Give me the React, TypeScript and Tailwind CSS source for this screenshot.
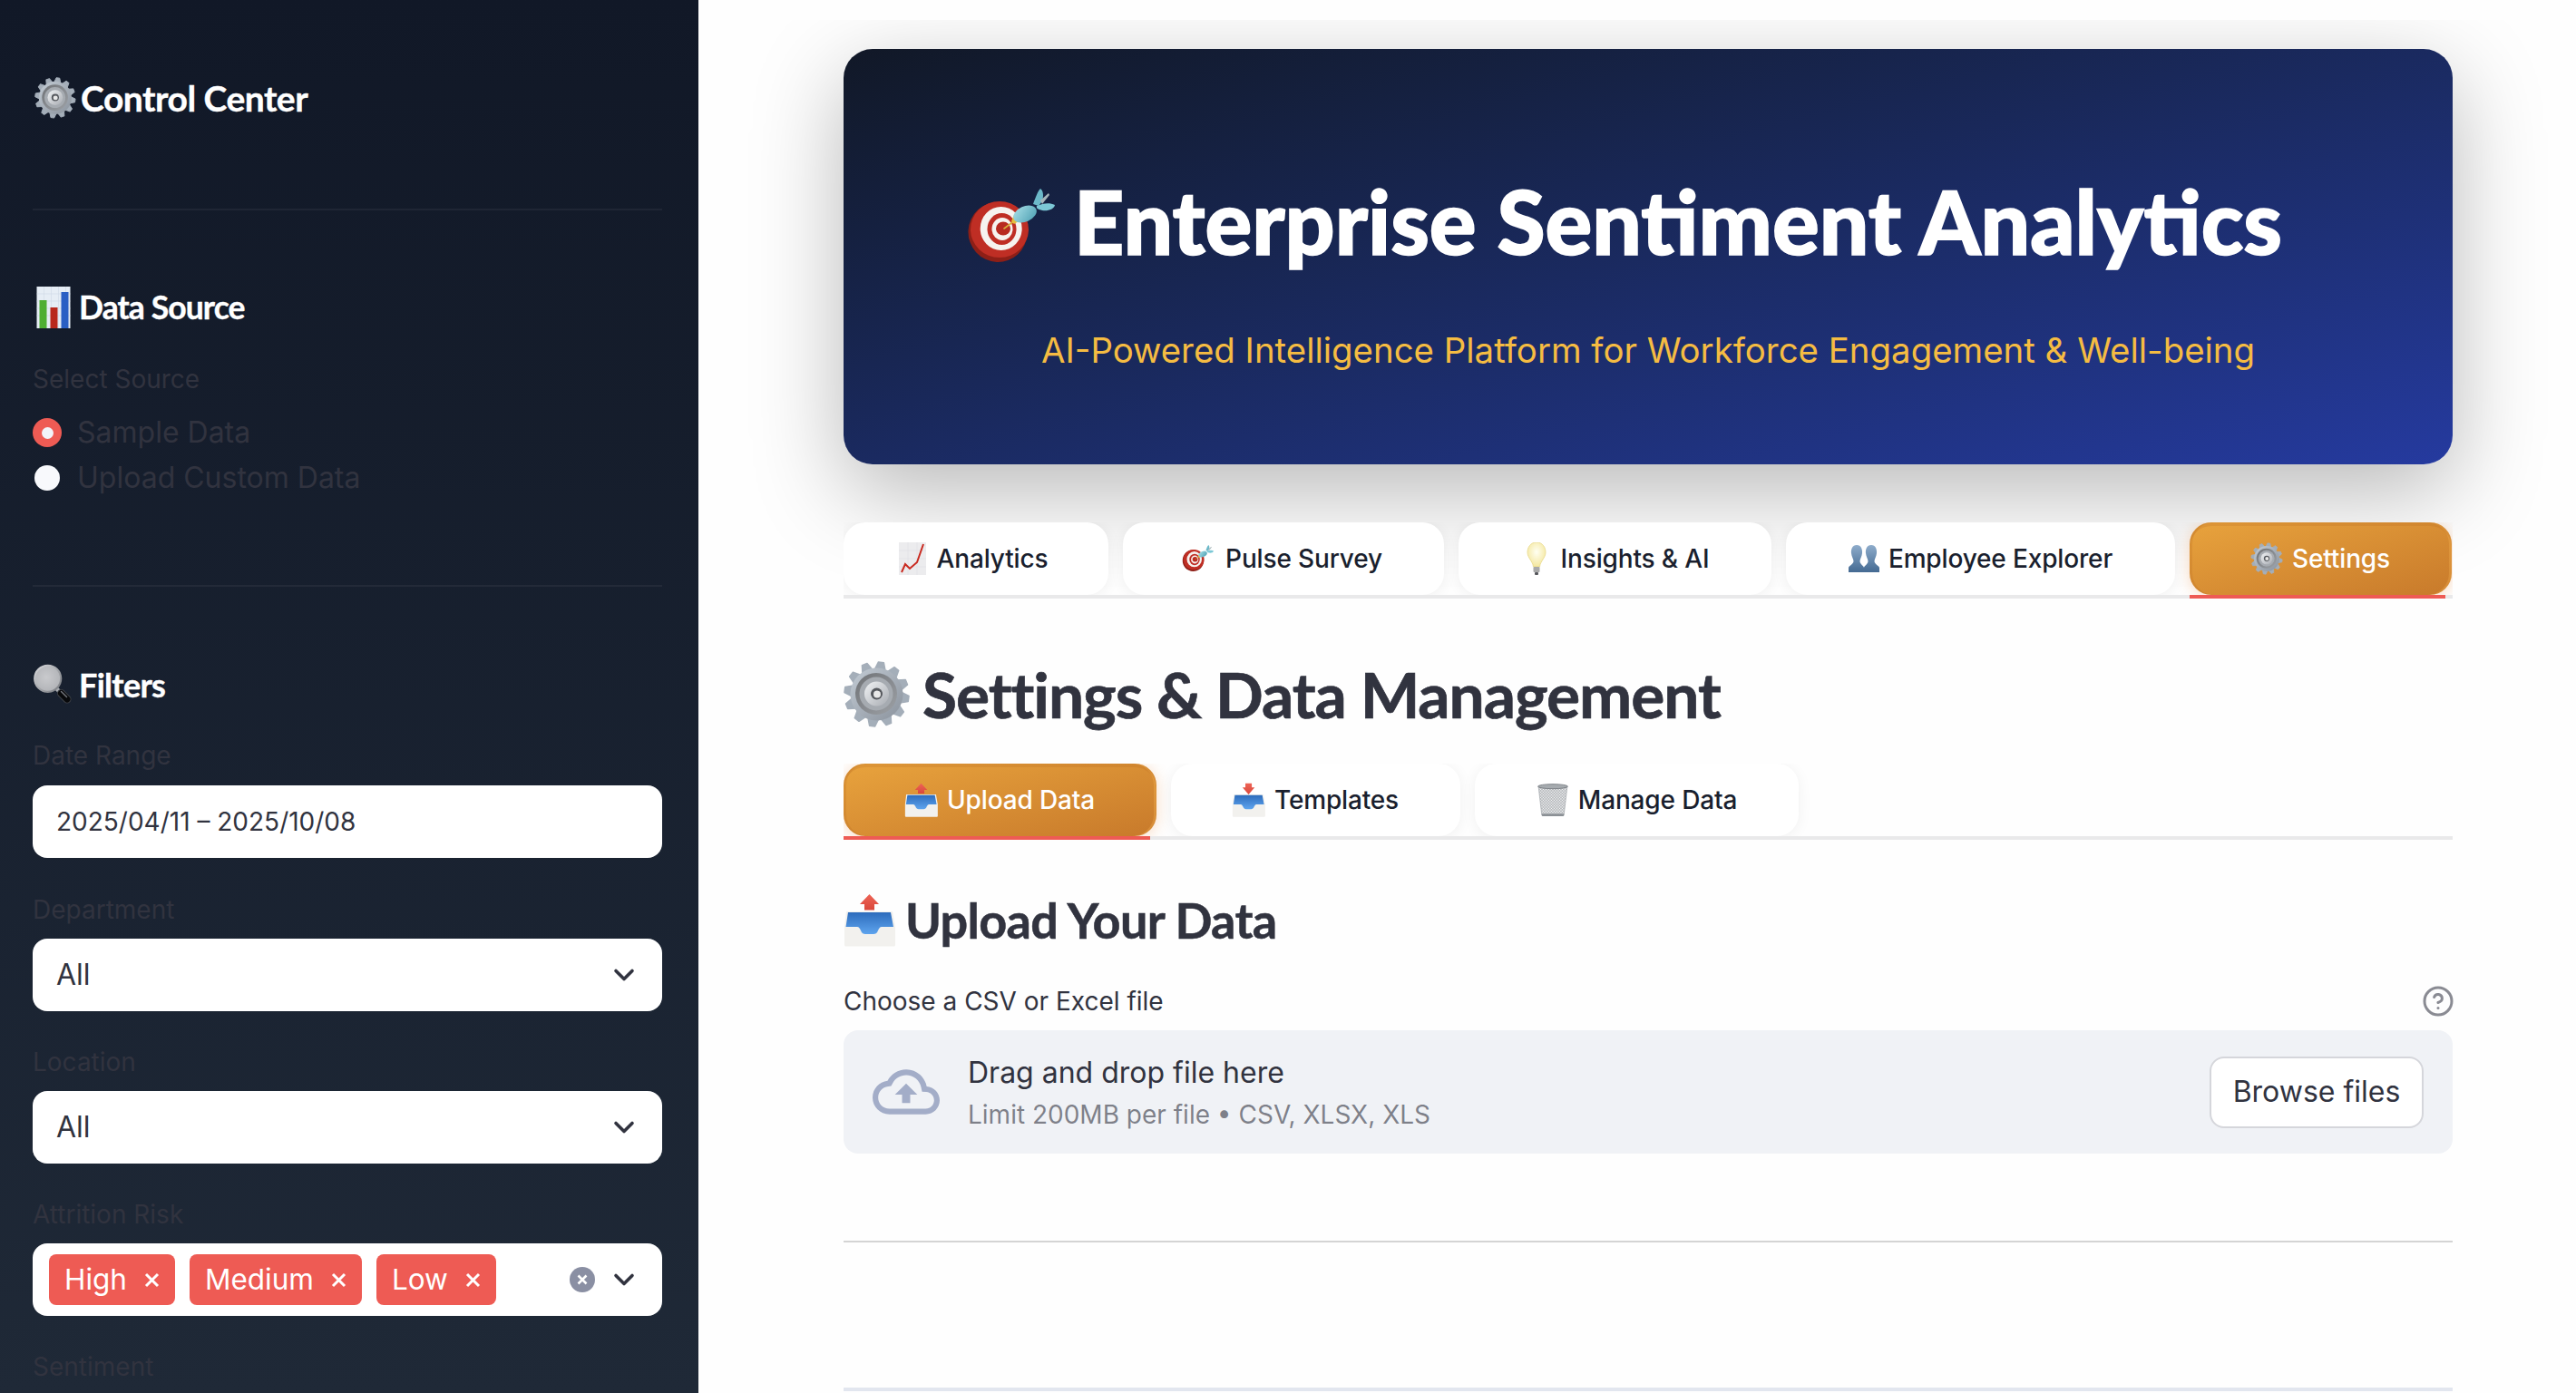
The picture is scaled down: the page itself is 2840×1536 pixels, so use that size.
import React from "react";
import { ChevronDown, CircleHelp } from "lucide-react";

function Gear({ className }: { className: string }) {
  const teeth = [8, 38, 68, 98, 128, 158, 188, 218, 248, 278, 308, 338];
  return (
    <svg viewBox="0 0 85 85" className={className}>
      <defs>
        <linearGradient id="gearBody" x1="0" y1="0" x2="1" y2="1">
          <stop offset="0" stopColor="#c3ccd5" />
          <stop offset="1" stopColor="#8a929c" />
        </linearGradient>
        <linearGradient id="gearRing" x1="0" y1="0" x2="1" y2="1">
          <stop offset="0" stopColor="#6f7276" />
          <stop offset="1" stopColor="#9da1a6" />
        </linearGradient>
        <linearGradient id="gearHub" x1="0" y1="0" x2="1" y2="1">
          <stop offset="0" stopColor="#f1f3f5" />
          <stop offset="1" stopColor="#a8acb2" />
        </linearGradient>
      </defs>
      {teeth.map((a) => (
        <polygon key={a} points="35.5,15 38.5,6 44.5,6 47.5,15" fill="#a4aeb9" stroke="#a4aeb9" strokeWidth="1.5" strokeLinejoin="round" transform={`rotate(${a} 41.5 41.5)`} />
      ))}
      <circle cx="41.5" cy="41.5" r="29" fill="url(#gearBody)" />
      <circle cx="41" cy="41" r="23" fill="url(#gearRing)" />
      <circle cx="41" cy="41" r="18.5" fill="#a6abb1" />
      <circle cx="41.5" cy="41" r="13.5" fill="url(#gearHub)" />
      <circle cx="41.5" cy="41" r="6.5" fill="#55585d" />
      <circle cx="42" cy="41.5" r="4" fill="#e8e8e8" />
    </svg>
  );
}

function BarChartEmoji({ className }: { className: string }) {
  return (
    <svg viewBox="0 0 37 46" className={className}>
      <rect x="0" y="0" width="37" height="46" fill="#e6edf5" />
      <path d="M0 8H37M0 16H37M0 24H37M0 32H37M8 0V46M16 0V46M24 0V46M32 0V46" stroke="#cfd9e6" strokeWidth="0.6" />
      <rect x="3" y="15" width="8" height="31" fill="#4fae32" />
      <rect x="15" y="23" width="8" height="23" fill="#b8281c" />
      <rect x="27" y="6" width="8" height="40" fill="#2a5fc4" />
    </svg>
  );
}

function Magnifier({ className }: { className: string }) {
  return (
    <svg viewBox="0 0 60 60" className={className}>
      <defs>
        <radialGradient id="lens" cx="0.45" cy="0.45" r="0.6">
          <stop offset="0" stopColor="#c9cacd" />
          <stop offset="1" stopColor="#b0b2b6" />
        </radialGradient>
        <linearGradient id="lensRim" x1="0" y1="0" x2="1" y2="1">
          <stop offset="0" stopColor="#d9dadd" />
          <stop offset="1" stopColor="#74777c" />
        </linearGradient>
      </defs>
      <path d="M32.5 34.5L37 39" stroke="#a9acb1" strokeWidth="4.5" />
      <path d="M37.5 39.5L44 46" stroke="#3d4046" strokeWidth="9" strokeLinecap="round" />
      <path d="M37.5 39.5L44 46" stroke="#08090b" strokeWidth="7" strokeLinecap="round" />
      <path d="M37.5 37.5L43.5 43.5" stroke="#74777d" strokeWidth="1.4" strokeLinecap="round" />
      <circle cx="22.7" cy="23.3" r="14.5" fill="url(#lens)" stroke="url(#lensRim)" strokeWidth="2.2" />
    </svg>
  );
}

function Target({ className }: { className: string }) {
  return (
    <svg viewBox="0 0 120 100" className={className}>
      <defs>
        <linearGradient id="dartBody" x1="0" y1="0" x2="1" y2="1">
          <stop offset="0" stopColor="#a9e0e8" />
          <stop offset="1" stopColor="#4d9fb2" />
        </linearGradient>
      </defs>
      <ellipse cx="43" cy="56" rx="32.5" ry="33" transform="rotate(-20 43 56)" fill="#8d1f17" />
      <ellipse cx="45" cy="53" rx="32" ry="31" fill="#bf2e24" />
      <ellipse cx="46.7" cy="52" rx="23" ry="24" fill="#f6f3ef" />
      <ellipse cx="47.5" cy="52.5" rx="16" ry="17.5" fill="#bf2e24" />
      <ellipse cx="48" cy="52.5" rx="11.5" ry="12.5" fill="#f6f3ef" />
      <ellipse cx="49" cy="52" rx="8" ry="7.5" fill="#b82a20" />
      <path d="M50 52L62 43" stroke="#d9b03a" strokeWidth="1.6" strokeLinecap="round" />
      <path d="M58 44L61 37L66 44L61 47Z" fill="#e6bf3d" />
      <path d="M82 25C85 17 87 11 90 8C93 10 94 15 92 22L88 27Z" fill="#6cb9c9" />
      <path d="M90 21L99 13L100 15L92 25Z" fill="#a7b6bb" />
      <path d="M86 27C93 24 100 23 106 26C105 31 98 33 92 32C88 31 85 30 86 27Z" fill="#7cc8d6" />
      <ellipse cx="73" cy="36" rx="13.5" ry="8.5" transform="rotate(-24 73 36)" fill="url(#dartBody)" />
    </svg>
  );
}

function ChartUp({ className }: { className: string }) {
  return (
    <svg viewBox="0 0 30 36" className={className}>
      <rect width="30" height="36" fill="#ececee" />
      <path d="M0 9H30M0 18H30M0 27H30M10 0V36M20 0V36" stroke="#dcdce0" strokeWidth="0.5" />
      <path d="M3 33L7 24L12 29L20 22L27 2" fill="none" stroke="#c92a20" strokeWidth="2" />
    </svg>
  );
}

function Bulb({ className }: { className: string }) {
  return (
    <svg viewBox="0 0 22 36" className={className}>
      <defs>
        <radialGradient id="bulbGlow" cx="0.5" cy="0.4" r="0.6">
          <stop offset="0" stopColor="#fffff2" />
          <stop offset="1" stopColor="#f4e79e" />
        </radialGradient>
      </defs>
      <path d="M11 0C4 0 1 6 1 11C1 17 7 21 7.5 27H14.5C15 21 21 17 21 11C21 6 18 0 11 0Z" fill="url(#bulbGlow)" stroke="#e9d98a" strokeWidth="0.8" />
      <rect x="7.5" y="27" width="7" height="6" rx="1" fill="#a9a9a9" />
      <rect x="9" y="33" width="4" height="3" rx="1" fill="#55565b" />
    </svg>
  );
}

function Busts({ className }: { className: string }) {
  return (
    <svg viewBox="0 0 34 30" className={className}>
      <defs>
        <linearGradient id="bustFill" x1="0" y1="0" x2="0" y2="1">
          <stop offset="0" stopColor="#8eaccb" />
          <stop offset="1" stopColor="#446a92" />
        </linearGradient>
      </defs>
      <path d="M9 0C14 0 15.5 5 15 9C14.6 13 12.5 15 12.5 18C12.5 21 17 23 17 25V30H0V25C0 23 5.5 21 5.5 18C5.5 15 3.4 13 3 9C2.5 5 4 0 9 0Z" fill="url(#bustFill)" />
      <path d="M25 0C30 0 31.5 5 31 9C30.6 13 28.5 15 28.5 18C28.5 21 34 23 34 25V30H17V25C17 23 21.5 21 21.5 18C21.5 15 19.4 13 19 9C18.5 5 20 0 25 0Z" fill="url(#bustFill)" />
    </svg>
  );
}

function Tray({ className, down }: { className: string; down?: boolean }) {
  return (
    <svg viewBox="0 0 70 70" className={className}>
      <defs>
        <linearGradient id="trayBlue" x1="0" y1="0" x2="0" y2="1">
          <stop offset="0" stopColor="#2d6cbc" />
          <stop offset="1" stopColor="#5ea4ee" />
        </linearGradient>
        <linearGradient id="trayRed" x1="0" y1="0" x2="0" y2="1">
          <stop offset="0" stopColor="#ee6456" />
          <stop offset="1" stopColor="#d9473b" />
        </linearGradient>
      </defs>
      <path d="M8 25H59L62 42V62C62 63 61 63.5 60 63.5H8C7 63.5 6 63 6 62V42Z" fill="#f2f1ee" />
      <path d="M10 26H57L60 42H47C45 42 44 44 43 46C42 49 40 50 38 50H29C27 50 25 49 24 46C23 44 22 42 20 42H7.5Z" fill="url(#trayBlue)" />
      {down ? (
        <path d="M28 6H39V13H44L33.5 25L23 13H28Z" fill="url(#trayRed)" />
      ) : (
        <path d="M33.5 6L44 17H39V23.5H28V17H23Z" fill="url(#trayRed)" />
      )}
    </svg>
  );
}

function Basket({ className }: { className: string }) {
  return (
    <svg viewBox="0 0 34 34" className={className}>
      <defs>
        <pattern id="mesh" width="2" height="2" patternUnits="userSpaceOnUse" patternTransform="rotate(45)">
          <rect width="2" height="2" fill="#f1f2f3" />
          <path d="M0 0H2M0 0V2" stroke="#6c7278" strokeWidth="0.6" />
        </pattern>
      </defs>
      <path d="M2 3H32L28.5 33H5.5Z" fill="url(#mesh)" stroke="#9ba0a5" strokeWidth="0.6" />
      <ellipse cx="17" cy="3" rx="15.5" ry="2.4" fill="#a6abaf" stroke="#72777c" strokeWidth="0.8" />
      <rect x="5.5" y="31.5" width="23" height="2.5" rx="1" fill="#8c9196" />
    </svg>
  );
}

function SideLabel({ children }: { children: React.ReactNode }) {
  return <div className="h-[40px] flex items-center text-[28px] text-[#31333f]">{children}</div>;
}

function SelectBox() {
  return (
    <div className="mt-[12px] h-[80px] rounded-[16px] bg-white flex items-center justify-between pl-[26px] pr-[24px] text-[32px] text-[#31333f]">
      <span>All</span>
      <ChevronDown size={36} strokeWidth={2.4} className="text-[#31333f]" />
    </div>
  );
}

function RiskTag({ label }: { label: string }) {
  return (
    <div className="h-[56px] rounded-[8px] bg-[#ee5b54] text-white text-[31.5px] flex items-center gap-[19px] px-[17px]">
      <span>{label}</span>
      <svg viewBox="0 0 17 17" className="w-[17px] h-[17px]">
        <path d="M2 2L15 15M15 2L2 15" stroke="white" strokeWidth="3" />
      </svg>
    </div>
  );
}

function Sidebar() {
  return (
    <aside className="w-[770px] h-[1536px] shrink-0 overflow-hidden bg-gradient-to-b from-[#111827] to-[#1f2937] pl-[36px] pr-[40px] pt-[78px]">
      <div className="h-[60px] flex items-center gap-[1px] -ml-[1px] text-white font-['Lato',sans-serif] font-bold text-[39px] tracking-[-0.5px] [-webkit-text-stroke:0.4px_white]">
        <Gear className="w-[53px] h-[53px]" />
        <span>Control Center</span>
      </div>
      <div className="mt-[92px] h-[2px] bg-white/5" />
      <div className="mt-[83px] h-[48px] flex items-center gap-[9px] pl-[4px] text-white font-['Lato',sans-serif] font-bold text-[35.5px] tracking-[-0.9px] [-webkit-text-stroke:0.4px_white]">
        <BarChartEmoji className="w-[38px] h-[46px]" />
        <span>Data Source</span>
      </div>
      <div className="mt-[35px]">
        <SideLabel>Select Source</SideLabel>
      </div>
      <div className="mt-[14px] text-[32px] text-[#31333f]">
        <div className="h-[50px] flex items-center gap-[17px]">
          <div className="w-[32px] flex justify-center">
            <div className="w-[32px] h-[32px] rounded-full bg-[#ee5b54] flex items-center justify-center">
              <div className="w-[13px] h-[13px] rounded-full bg-[#f2f4f9]" />
            </div>
          </div>
          <span>Sample Data</span>
        </div>
        <div className="h-[50px] flex items-center gap-[17px]">
          <div className="w-[32px] flex justify-center">
            <div className="w-[28px] h-[28px] rounded-full bg-[#f8f9fc]" />
          </div>
          <span>Upload Custom Data</span>
        </div>
      </div>
      <div className="mt-[93px] h-[2px] bg-white/5" />
      <div className="mt-[84px] h-[48px] flex items-center text-white font-['Lato',sans-serif] font-bold text-[36px] tracking-[-0.7px] [-webkit-text-stroke:0.4px_white]">
        <Magnifier className="w-[60px] h-[60px] -ml-[6px] -mr-[3px] shrink-0" />
        <span>Filters</span>
      </div>
      <div className="mt-[34px]">
        <SideLabel>Date Range</SideLabel>
        <div className="mt-[13px] h-[80px] rounded-[16px] bg-white flex items-center pl-[26px] text-[28px] text-[#31333f]">
          2025/04/11 – 2025/10/08
        </div>
      </div>
      <div className="mt-[37px]">
        <SideLabel>Department</SideLabel>
        <SelectBox />
      </div>
      <div className="mt-[36px]">
        <SideLabel>Location</SideLabel>
        <SelectBox />
      </div>
      <div className="mt-[36px]">
        <SideLabel>Attrition Risk</SideLabel>
        <div className="mt-[12px] h-[80px] rounded-[16px] bg-white flex items-center justify-between pl-[18px] pr-[24px]">
          <div className="flex gap-[16px]">
            <RiskTag label="High" />
            <RiskTag label="Medium" />
            <RiskTag label="Low" />
          </div>
          <div className="flex items-center gap-[14px]">
            <svg viewBox="0 0 28 28" className="w-[28px] h-[28px]">
              <circle cx="14" cy="14" r="14" fill="#8a8fa3" />
              <path d="M9.5 9.5L18.5 18.5M18.5 9.5L9.5 18.5" stroke="white" strokeWidth="2.6" />
            </svg>
            <ChevronDown size={36} strokeWidth={2.4} className="text-[#31333f]" />
          </div>
        </div>
      </div>
      <div className="mt-[36px]">
        <SideLabel>Sentiment</SideLabel>
      </div>
    </aside>
  );
}

function TabItem({ width, active, icon, label }: { width: string; active?: boolean; icon: React.ReactNode; label: string }) {
  return (
    <div
      className={
        width +
        " h-[80px] shrink-0 rounded-[24px] flex items-center justify-center gap-[10px] text-[28px] font-medium tracking-[-0.15px] " +
        (active
          ? "bg-gradient-to-br from-[#e8a33d] to-[#c87a2b] text-white shadow-[0_2px_16px_rgba(237,137,54,0.3),inset_0_4px_0_rgba(180,100,30,0.2),inset_3px_0_0_rgba(180,100,30,0.2),inset_-3px_0_0_rgba(255,190,90,0.25)]"
          : "bg-white text-[#1a1f2e] shadow-[0_2px_16px_rgba(0,0,0,0.06)]")
      }
    >
      {icon}
      <span>{label}</span>
    </div>
  );
}

function MainPanel() {
  return (
    <main className="flex-1 h-[1536px] overflow-hidden bg-[#fefefe] pl-[160px] pr-[136px] pt-[54px] text-[#31333f]">
      <section className="h-[458px] rounded-[32px] bg-gradient-to-br from-[#111827] to-[#253a9f] shadow-[0_30px_100px_rgba(0,0,0,0.28)] [clip-path:inset(-32px_-200px_-166px_-200px)] flex flex-col items-center">
        <div className="mt-[146px] h-[100px] flex items-center gap-[7px] pr-[61px]">
          <Target className="w-[120px] h-[100px] shrink-0" />
          <h1 className="mb-[12px] font-['Lato',sans-serif] font-black text-[96.5px] leading-none text-white whitespace-nowrap [-webkit-text-stroke:1.6px_white]">Enterprise Sentiment Analytics</h1>
        </div>
        <p className="mt-[67px] text-[38.4px] leading-none text-[#f5bc42]">AI-Powered Intelligence Platform for Workforce Engagement &amp; Well-being</p>
      </section>

      <div className="relative mt-[64px]">
        <div className="h-[80px] flex gap-[16px] overflow-hidden">
          <TabItem width="w-[292px] pr-[6px]" icon={<ChartUp className="w-[30px] h-[36px] mr-[2px]" />} label="Analytics" />
          <TabItem width="w-[354px] pr-[3px]" icon={<Target className="w-[43px] h-[36px] -ml-[3px] -mr-[2px]" />} label="Pulse Survey" />
          <TabItem width="w-[345px]" icon={<Bulb className="w-[22px] h-[36px] ml-[6px] mr-[6px]" />} label="Insights & AI" />
          <TabItem width="w-[429px]" icon={<Busts className="w-[34px] h-[30px]" />} label="Employee Explorer" />
          <TabItem width="w-[289px]" active icon={<Gear className="w-[41px] h-[41px] -mx-[3px]" />} label="Settings" />
        </div>
        <div className="h-[4px] bg-[#31333f]/10">
          <div className="h-[4px] ml-[1484px] w-[282px] bg-[#ee5b54]" />
        </div>
      </div>

      <div className="relative mt-[61px] h-[90px] flex items-center gap-[7px]">
        <Gear className="w-[85px] h-[85px] -ml-[5px] shrink-0" />
        <h2 className="font-['Lato',sans-serif] font-bold text-[69.5px] leading-none tracking-[-1.05px] [-webkit-text-stroke:0.7px_#31333f]">Settings &amp; Data Management</h2>
      </div>

      <div className="relative mt-[31px]">
        <div className="h-[80px] flex gap-[16px] overflow-hidden">
          <TabItem width="w-[345px]" active icon={<Tray className="w-[45px] h-[45px] -ml-[4px] -mr-[5px]" />} label="Upload Data" />
          <TabItem width="w-[319px]" icon={<Tray down className="w-[45px] h-[45px] -ml-[4px] -mr-[5px]" />} label="Templates" />
          <TabItem width="w-[357px]" icon={<Basket className="w-[36px] h-[36px]" />} label="Manage Data" />
        </div>
        <div className="h-[4px] bg-[#31333f]/10">
          <div className="h-[4px] w-[338px] bg-[#ee5b54]" />
        </div>
      </div>

      <div className="relative mt-[54px] h-[70px] flex items-center gap-[3px]">
        <Tray className="w-[70px] h-[70px] -ml-[5px] shrink-0" />
        <h3 className="font-['Lato',sans-serif] font-bold text-[54px] leading-none tracking-[-0.7px] [-webkit-text-stroke:0.5px_#31333f]">Upload Your Data</h3>
      </div>

      <div className="mt-[34px] h-[40px] flex items-center justify-between text-[28px]">
        <span>Choose a CSV or Excel file</span>
        <CircleHelp size={36} strokeWidth={2} className="text-[#8a8b93] -mr-[2px]" />
      </div>

      <div className="mt-[12px] h-[136px] rounded-[16px] bg-[#f0f2f6] flex items-center pl-[32px] pr-[32px]">
        <svg viewBox="0 0 24 24" className="w-[74px] h-[74px] text-[#a3adc8]" fill="currentColor">
          <path d="M19.35 10.04C18.67 6.59 15.64 4 12 4 9.11 4 6.6 5.64 5.35 8.04 2.34 8.36 0 10.91 0 14c0 3.31 2.69 6 6 6h13c2.76 0 5-2.24 5-5 0-2.64-2.05-4.78-4.65-4.96zM19 18H6c-2.21 0-4-1.79-4-4 0-2.05 1.53-3.76 3.56-3.97l1.07-.11.5-.95C8.08 7.14 9.94 6 12 6c2.62 0 4.88 1.86 5.39 4.43l.3 1.5 1.53.11c1.56.1 2.78 1.41 2.78 2.96 0 1.65-1.35 3-3 3zM8 13h2.55v3h2.9v-3H16l-4-4z" />
        </svg>
        <div className="ml-[31px] flex-1 pt-[3px]">
          <div className="text-[32px] leading-[47px]">Drag and drop file here</div>
          <div className="text-[28px] leading-[47px] text-[#31333f]/60">Limit 200MB per file • CSV, XLSX, XLS</div>
        </div>
        <button className="w-[236px] h-[79px] rounded-[16px] border-2 border-[#d5d6db] bg-white text-[32px]">Browse files</button>
      </div>

      <div className="mt-[96px] h-[2px] bg-[#d4d4d4]" />
      <div className="mt-[160px] h-[4px] bg-[#e2e6ef]" />
    </main>
  );
}

export default function App() {
  return (
    <div className="w-[2840px] h-[1536px] flex overflow-hidden font-['Inter',sans-serif]">
      <Sidebar />
      <MainPanel />
    </div>
  );
}
